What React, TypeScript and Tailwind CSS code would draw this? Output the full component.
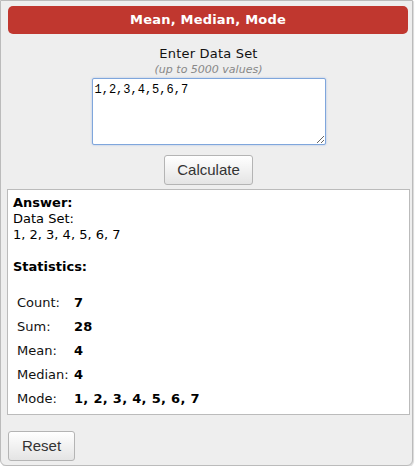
import React from "react";

const rows: [string, string][] = [
  ["Count:", "7"],
  ["Sum:", "28"],
  ["Mean:", "4"],
  ["Median:", "4"],
  ["Mode:", "1, 2, 3, 4, 5, 6, 7"],
];

export default function App() {
  return (
    <div className="w-[413px] h-[466px] border border-[#bbb] rounded-b-[6px] bg-[#eeeeee] pl-[6px] pt-[5px] font-['DejaVu_Sans',Verdana,sans-serif] text-[13px] leading-[16px] text-black shadow-[1px_1px_1px_rgba(0,0,0,0.15)]">
      <div className="w-[400px] ml-[1px] h-[28px] rounded-[5px] bg-[#c0372f] flex items-center justify-center text-white font-bold text-[13px] tracking-[0.2px]">
        Mean, Median, Mode
      </div>
      <div className="w-[403px] flex flex-col items-center">
        <div className="mt-[12px] leading-[16px] text-[13px] tracking-[0.2px] text-[#111]">Enter Data Set</div>
        <div className="mt-[1px] text-[11px] leading-[14px] italic text-[#888]">(up to 5000 values)</div>
        <textarea
          defaultValue="1,2,3,4,5,6,7"
          className="block mt-[1px] w-[234px] h-[67px] bg-white border border-[#7fa6dc] rounded-[2px] px-[2px] py-[4px] font-['Liberation_Mono',monospace] text-[12px] leading-[15px] text-black resize-y outline-none shadow-[0_0_2px_rgba(90,140,220,0.5)]"
        />
        <button className="mt-[10px] w-[89px] h-[30px] rounded-[3px] border border-[#b4b4b4] bg-gradient-to-b from-white to-[#e4e4e4] font-['Liberation_Sans',Arial,sans-serif] text-[15px] text-[#333]">
          Calculate
        </button>
      </div>
      <div className="mt-[4px] w-[403px] h-[226px] bg-white border border-[#bbb] pl-[5px] pt-[5px]">
        <div className="font-bold">Answer:</div>
        <div>Data Set:</div>
        <div>1, 2, 3, 4, 5, 6, 7</div>
        <div className="h-[16px]" />
        <div className="font-bold">Statistics:</div>
        <div className="h-[16px]" />
        <div className="flex flex-col">
          {rows.map(([k, v]) => (
            <div key={k} className="flex h-[24px] items-center">
              <div className="w-[57px] pl-[4px] text-[#111]">{k}</div>
              <div className="pl-[4px] font-bold tracking-[0.3px]">{v}</div>
            </div>
          ))}
        </div>
      </div>
      <button className="mt-[16px] ml-[1px] w-[67px] h-[30px] rounded-[3px] border border-[#b4b4b4] bg-gradient-to-b from-white to-[#e4e4e4] font-['Liberation_Sans',Arial,sans-serif] text-[15px] text-[#333]">
        Reset
      </button>
    </div>
  );
}
